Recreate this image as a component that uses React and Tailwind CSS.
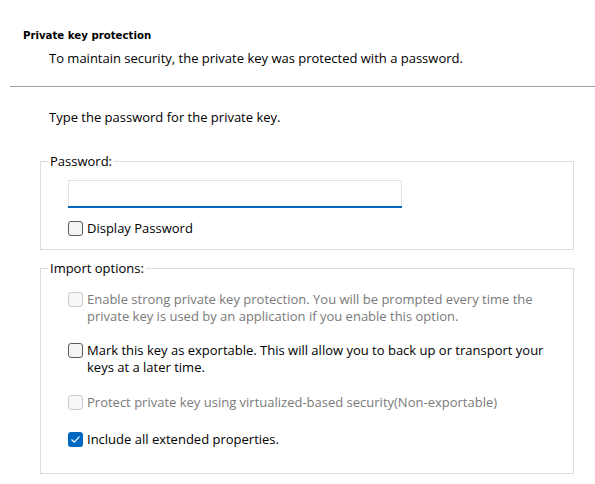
import React from "react";

function Box({ state }) {
  if (state === "checked") {
    return (
      <span className="block w-[15px] h-[15px] shrink-0 rounded-[3px] bg-[#0067c0]">
        <svg width="15" height="15" viewBox="0 0 15 15" className="block">
          <path d="M3.8 7.8 L6.3 10.2 L11.2 4.9" fill="none" stroke="#ffffff" strokeWidth="1.2" strokeLinecap="round" strokeLinejoin="round" />
        </svg>
      </span>
    );
  }
  if (state === "disabled") {
    return <span className="block w-[15px] h-[15px] shrink-0 rounded-[3px] border border-[#cccccc] bg-[#f7f7f7]" />;
  }
  return <span className="block w-[15px] h-[15px] shrink-0 rounded-[3px] border border-[#5d5d5d] bg-[#f4f4f4]" />;
}

function Option({ state, children, className = "" }) {
  return (
    <div className={"flex items-start " + className}>
      <div className="mt-[1px] shrink-0">
        <Box state={state} />
      </div>
      <div className={"ml-[4px] leading-[17px] " + (state === "disabled" ? "text-[#7a7a7a]" : "text-black")}>
        {children}
      </div>
    </div>
  );
}

export default function App() {
  return (
    <div
      className="w-[595px] h-[484px] bg-white overflow-hidden text-[13px] text-black"
      style={{ fontFamily: '"Open Sans", "Noto Sans", sans-serif' }}
    >
      <div
        className="pt-[29px] pl-[23px] leading-[14px] text-[10.2px] font-bold"
        style={{ fontFamily: '"DejaVu Sans", sans-serif' }}
      >
        Private key protection
      </div>
      <div className="mt-[7px] pl-[49px] leading-[17px]">
        To maintain security, the private key was protected with a password.
      </div>
      <div className="mt-[19px] ml-[10px] h-px bg-[#a0a0a0]" />
      <div className="mt-[22px] pl-[49px] leading-[17px]">Type the password for the private key.</div>

      <fieldset className="mt-[27px] ml-[40px] w-[534px] border border-[#dcdcdc] pb-[12px]">
        <legend className="ml-[7px] px-[2px] leading-[17px]">Password:</legend>
        <div className="mt-[10px] ml-[27px] w-[334px] h-[28px] border border-[#e3e3e3] border-b-0 bg-white flex flex-col justify-end">
          <div className="h-[2px] bg-[#0067c0] -mx-px" />
        </div>
        <Option state="unchecked" className="mt-[12px] ml-[27px]">
          Display Password
        </Option>
      </fieldset>

      <fieldset className="mt-[10px] ml-[40px] w-[534px] h-[214px] border border-[#dcdcdc]">
        <legend className="ml-[7px] px-[2px] leading-[17px]">Import options:</legend>
        <div className="ml-[27px] mr-[10px] pt-[14px] flex flex-col">
          <Option state="disabled">
            Enable strong private key protection. You will be prompted every time the
            <br />
            private key is used by an application if you enable this option.
          </Option>
          <Option state="unchecked" className="mt-[17px]">
            Mark this key as exportable. This will allow you to back up or transport your
            <br />
            keys at a later time.
          </Option>
          <Option state="disabled" className="mt-[18px]">
            Protect private key using virtualized-based security(Non-exportable)
          </Option>
          <Option state="checked" className="mt-[20px]">
            Include all extended properties.
          </Option>
        </div>
      </fieldset>
    </div>
  );
}
